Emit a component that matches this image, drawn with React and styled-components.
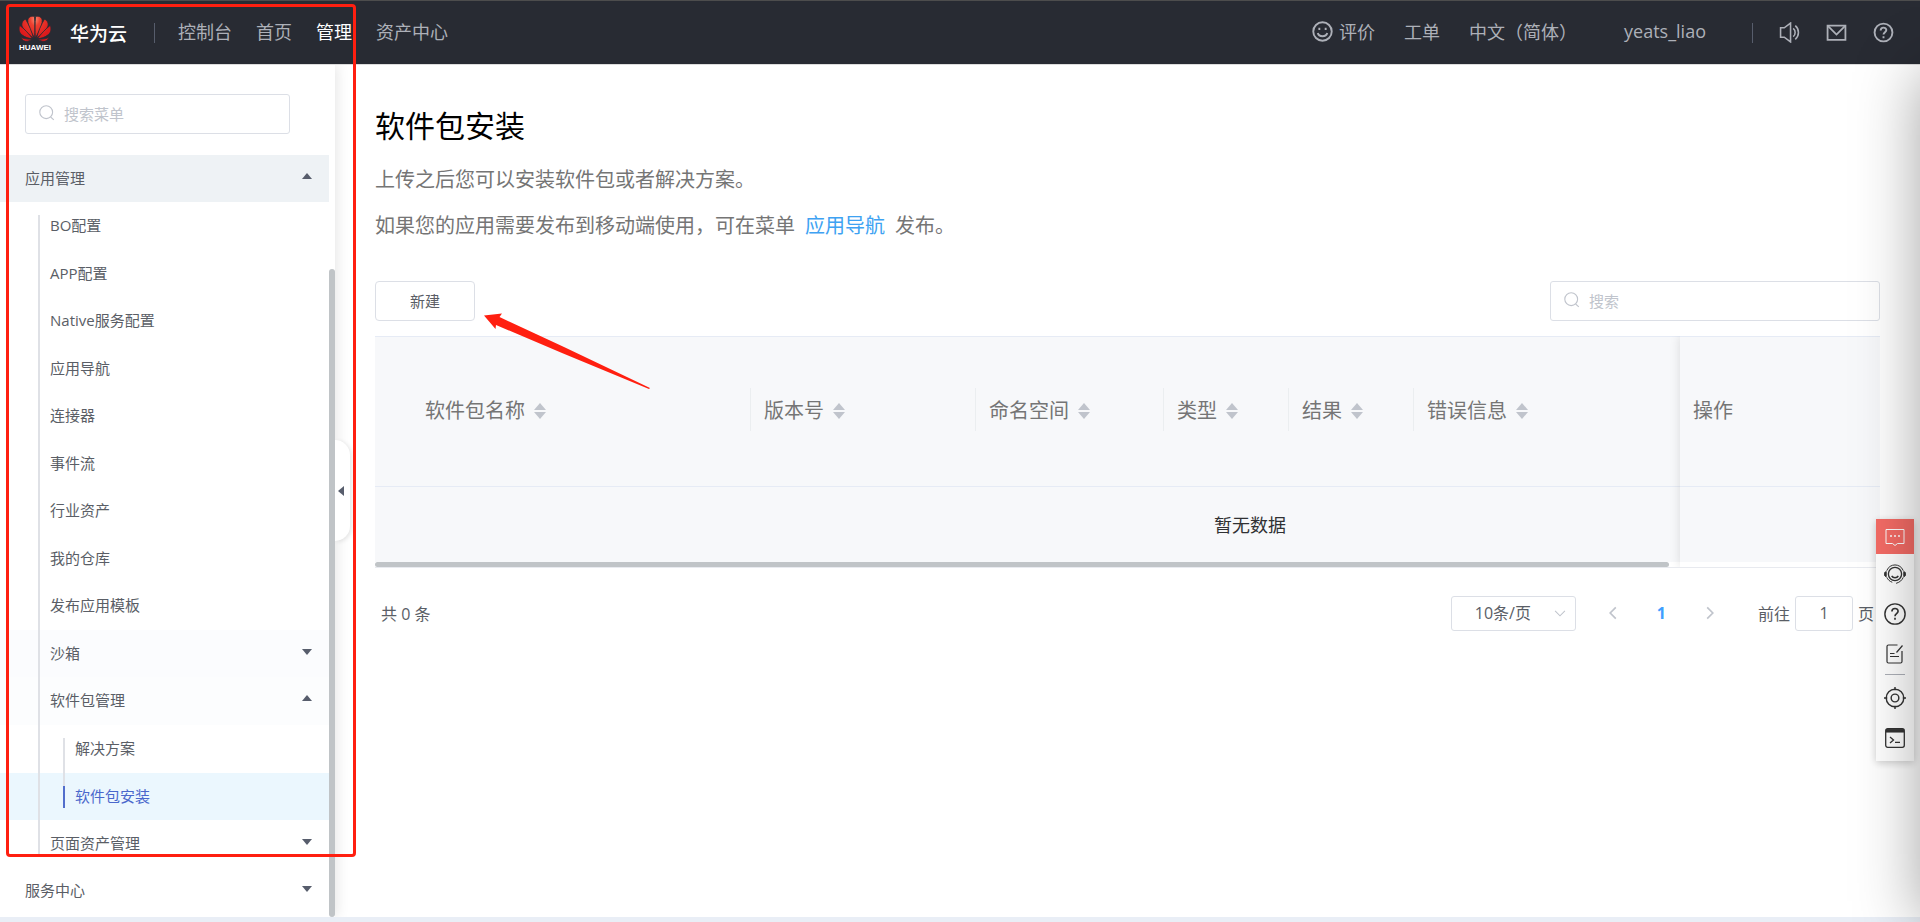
import React from 'react';
import styled, { createGlobalStyle, css } from 'styled-components';

const GlobalStyle = createGlobalStyle`
  * {
    box-sizing: border-box;
  }

  body {
    background: #fff;
    color: #5a5e66;
    font-family: 'Open Sans', 'Noto Sans CJK SC', sans-serif;
    font-size: 16px;
    margin: 0;
    overflow-x: hidden;
  }

  ul, h1, p {
    margin: 0;
    padding: 0;
  }

  ul {
    list-style: none;
  }

  a {
    color: inherit;
    text-decoration: none;
  }

  button, input, select {
    font-family: inherit;
  }
`;

const Page = styled.div`
  display: flex;
  flex-direction: column;
  min-height: 100vh;
  position: relative;
`;

/* ---------- top bar ---------- */

const TopBar = styled.header`
  align-items: center;
  background: #282b33;
  border-bottom: 1px solid #dcdcdc;
  border-top: 1px solid #4d4d4d;
  color: #adb0b8;
  display: flex;
  font-size: 18px;
  height: 65px;
  padding: 0 26px 0 18px;
`;

const Brand = styled.a`
  align-items: center;
  color: #fff;
  display: flex;
  font-size: 19px;
  font-weight: 500;
  gap: 18px;
`;

const BarDivider = styled.span`
  background: #575d6c;
  height: 20px;
  margin: ${({ $side }) => ($side === 'left' ? '0 23px 0 27px' : '0 26px 0 46px')};
  width: 1px;
`;

const Nav = styled.nav`
  display: flex;
  gap: 24px;
  padding-bottom: 3px;
`;

const NavLink = styled.a`
  color: ${({ $active }) => ($active ? '#fff' : 'inherit')};
`;

const Account = styled.div`
  align-items: center;
  display: flex;
  gap: 29px;
  margin-left: auto;
  padding-bottom: 3px;
`;

const RateLink = styled.a`
  align-items: center;
  display: flex;
  gap: 6px;
`;

const UserLink = styled.a`
  margin-left: 18px;
`;

const BarIcons = styled.div`
  display: flex;
  gap: 26px;
`;

const IconButton = styled.button`
  background: none;
  border: 0;
  color: inherit;
  cursor: pointer;
  display: flex;
  padding: 0;
`;

/* ---------- side menu ---------- */

const Body = styled.div`
  display: flex;
  flex: 1;
`;

const Sidebar = styled.aside`
  box-shadow: 2px 0 12px rgba(0, 0, 0, 0.1);
  clip-path: inset(0 -20px 0 0);
  flex: none;
  padding: 29px 6px 0 0;
  position: relative;
  width: 335px;
`;

const SearchBox = styled.label`
  align-items: center;
  border: 1px solid #dcdfe6;
  border-radius: 3px;
  color: #c0c4cc;
  display: flex;
  gap: 9px;
  height: 40px;
  padding: 0 13px;

  svg {
    margin-bottom: 3px;
  }

  input {
    background: none;
    border: 0;
    flex: 1;
    font-size: 15px;
    min-width: 0;
    outline: none;
    padding: 0;
  }

  input::placeholder {
    color: #c0c4cc;
  }
`;

const MenuSearch = styled(SearchBox)`
  margin: 0 39px 21px 25px;
`;

const MenuRow = styled.a`
  align-items: center;
  background: ${({ $tone }) => $tone || 'none'};
  display: flex;
  font-size: 15px;
  height: 47px;
  justify-content: space-between;
  padding: 0 17px 3px ${({ $level }) => 25 * $level}px;
  position: relative;

  ${({ $active }) => $active && css`
    background: #ebf7fe;
    color: #4a68cc;

    &::after {
      background: #526ecc;
      content: '';
      height: 22px;
      left: 63px;
      position: absolute;
      top: 13px;
      width: 2px;
      z-index: 2;
    }
  `}
`;

const SubMenu = styled.ul`
  position: relative;

  > li:nth-child(odd) > a {
    height: 48px;
  }

  &::before {
    background: #dfe1e6;
    bottom: 13px;
    content: '';
    left: ${({ $level }) => 25 * $level - 12}px;
    position: absolute;
    top: 13px;
    width: 2px;
    z-index: 1;
  }
`;

const Caret = styled.i`
  border: 5px solid transparent;
  border-bottom: ${({ $up }) => ($up ? '6px solid #575d6c' : 0)};
  border-top: ${({ $up }) => ($up ? 0 : '6px solid #575d6c')};
  margin-bottom: ${({ $up }) => ($up ? 3 : 0)}px;
`;

const MenuScrollbar = styled.span`
  background: #c0c4c7;
  border-radius: 3px;
  bottom: 0;
  position: absolute;
  right: 0;
  top: 204px;
  width: 6px;
`;

const CollapseHandle = styled.button`
  align-items: center;
  background: #fff;
  border: 0;
  border-radius: 0 15px 15px 0;
  box-shadow: 2px 1px 4px rgba(0, 0, 0, 0.1);
  clip-path: inset(-6px -8px -6px 0);
  display: flex;
  height: 101px;
  left: 100%;
  padding: 0 0 0 3px;
  position: absolute;
  top: 375px;
  width: 15px;

  &::before {
    border: 5px solid transparent;
    border-left: 0;
    border-right: 6px solid #575d6c;
    content: '';
  }
`;

const FooterStrip = styled.div`
  background: #e9eef6;
  height: 5px;
`;

/* ---------- content ---------- */

const Content = styled.main`
  flex: 1;
  min-width: 0;
  padding: 40px 40px 0;
`;

const Title = styled.h1`
  color: #000;
  font-size: 30px;
  font-weight: 400;
  line-height: 42px;
  margin-bottom: 10px;
`;

const Intro = styled.p`
  color: #757575;
  font-size: 20px;
  line-height: 46px;

  a {
    color: #3ea2f2;
    margin: 0 10px;
  }
`;

const Toolbar = styled.div`
  display: flex;
  justify-content: space-between;
  margin: 32px 0 15px;
`;

const CreateButton = styled.button`
  background: #fff;
  border: 1px solid #dcdfe6;
  border-radius: 4px;
  color: #5a5e66;
  font-size: 15px;
  height: 40px;
  padding: 0 0 2px;
  width: 100px;
`;

const TableSearch = styled(SearchBox)`
  width: 330px;
`;

const TableFrame = styled.div`
  border-bottom: 1px solid #e8eaef;
  overflow: hidden;
  position: relative;
`;

const Table = styled.table`
  background: #f7f8fa;
  border-collapse: collapse;
  border-top: 1px solid #e6ebf5;
  table-layout: fixed;
  width: ${({ $wide }) => ($wide ? '1750px' : '100%')};
`;

const HeadCell = styled.th`
  border-bottom: 1px solid #e6ebf5;
  color: #757575;
  font-size: 20px;
  font-weight: 400;
  height: 150px;
  padding: 0 0 4px;
  text-align: left;
  width: ${({ $width }) => $width}px;
`;

const HeadLabel = styled.div`
  align-items: center;
  border-right: 1px solid ${({ $last }) => ($last ? 'transparent' : '#ebeef0')};
  display: flex;
  gap: 9px;
  height: 43px;
  padding-left: ${({ $first }) => ($first ? 50 : 13)}px;
`;

const SortArrows = styled.span`
  display: flex;
  flex-direction: column;
  gap: 2px;
  padding-top: 2px;

  &::before,
  &::after {
    border: 6px solid transparent;
    content: '';
  }

  &::before {
    border-bottom: 7px solid #c0c4cc;
    border-top: 0;
  }

  &::after {
    border-bottom: 0;
    border-top: 7px solid #c0c4cc;
  }
`;

const EmptyCell = styled.td`
  color: #303133;
  font-size: 18px;
  height: 75px;
  padding: 0;
  text-align: center;
`;

const FixedColumn = styled.div`
  bottom: 0;
  box-shadow: 0 0 10px rgba(0, 0, 0, 0.12);
  position: absolute;
  right: 0;
  top: 0;
  width: 200px;
`;

const TableScrollbar = styled.div`
  height: 5px;

  &::before {
    background: #c0c4c7;
    border-radius: 3px;
    content: '';
    display: block;
    height: 5px;
    width: 86%;
  }
`;

const Pagination = styled.div`
  align-items: center;
  display: flex;
  height: 35px;
  margin-top: 28px;
  padding: 0 6px;
`;

const SizeSelect = styled.div`
  align-items: center;
  border: 1px solid #dcdfe6;
  border-radius: 3px;
  color: #c0c4cc;
  display: flex;
  height: 35px;
  margin-left: auto;
  padding-right: 8px;
  width: 125px;

  select {
    appearance: none;
    background: none;
    border: 0;
    color: #5a5e66;
    flex: 1;
    font-size: 16px;
    padding: 0 0 0 23px;
  }
`;

const Pager = styled.div`
  align-items: center;
  color: #c0c4cc;
  display: flex;
  gap: 37px;
  margin: 0 41px 0 30px;
`;

const PageNumber = styled.button`
  background: none;
  border: 0;
  color: #409eff;
  font-size: 16px;
  font-weight: 700;
  padding: 0;
`;

const Jumper = styled.label`
  align-items: center;
  display: flex;
  gap: 5px;

  input {
    border: 1px solid #dcdfe6;
    border-radius: 3px;
    color: #5a5e66;
    font-size: 16px;
    height: 35px;
    padding: 0;
    text-align: center;
    width: 58px;
  }
`;

/* ---------- floating parts ---------- */

const HelpDock = styled.aside`
  align-items: center;
  background: #fff;
  box-shadow: 0 2px 8px rgba(0, 0, 0, 0.2);
  color: #333;
  display: flex;
  flex-direction: column;
  position: fixed;
  right: 6px;
  top: 519px;
  width: 38px;
`;

const DockButton = styled.button`
  align-items: center;
  background: ${({ $alert }) => ($alert ? '#f56c66' : 'none')};
  border: 0;
  color: ${({ $alert }) => ($alert ? '#fff' : 'inherit')};
  display: flex;
  height: ${({ $alert }) => ($alert ? 35 : 40)}px;
  justify-content: center;
  padding: 0;
  width: 38px;
`;

const DockRule = styled.span`
  background: #adb0b8;
  height: 1px;
  margin-bottom: 3px;
  width: 20px;
`;

const DockGroup = styled.div`
  padding-bottom: ${({ $last }) => ($last ? 3 : 0)}px;
`;

const DrawerShadow = styled.div`
  bottom: 0;
  box-shadow: 0 0 60px rgba(0, 0, 0, 0.36);
  left: 100%;
  pointer-events: none;
  position: fixed;
  top: 72px;
  width: 200px;
`;

const Highlight = styled.div`
  border: 3px solid #ff1f10;
  border-radius: 4px;
  height: 853px;
  left: 6px;
  pointer-events: none;
  position: absolute;
  top: 4px;
  width: 350px;
  z-index: 2;
`;

const Pointer = styled.svg`
  left: 484px;
  pointer-events: none;
  position: absolute;
  top: 312px;
`;

/* ---------- icons ---------- */

const Icon = ({ size = 20, stroke = 1.5, children }) => (
  <svg
    width={size}
    height={size}
    viewBox="0 0 20 20"
    fill="none"
    stroke="currentColor"
    strokeWidth={stroke}
    aria-hidden="true"
  >
    {children}
  </svg>
);

const SearchIcon = () => (
  <Icon size={16} stroke={1.4}>
    <circle cx="9" cy="9" r="8" />
    <path d="M14.500 15l4 3.500" />
  </Icon>
);

const ChevronIcon = ({ d, stroke = 2.4 }) => (
  <Icon size={14} stroke={stroke}>
    <path d={d} />
  </Icon>
);

const petals = [
  'M16.700 22.800C16.900 16 17.200 8 16.400 1.600C13 .2 10 2.400 9.800 5.400C9.600 11 13.500 18 16.700 22.800Z',
  'M15.400 23C14 17 11 10 7.600 4.200C4.400 5.200 3 9 4.400 12C6.800 16.400 11.600 20.600 15.400 23Z',
  'M14.600 23.600C11.500 19.500 6.500 14 1.800 10.400C.4 13.400 .8 17 3.600 19.600C7 22.400 11 23.600 14.600 23.600Z',
  'M14.400 24.200C11 24.400 6.800 24 2.800 22.600C4.200 25.500 6.800 26.800 9.600 26.200C11.600 25.800 13 25 14.400 24.200Z',
];

const HuaweiLogo = () => (
  <svg width="34" height="36" viewBox="0 0 34 36" aria-hidden="true">
    <defs>
      <radialGradient id="petal" cx="20" cy="4" r="20" gradientUnits="userSpaceOnUse">
        <stop offset="0" stopColor="#ffb59a" />
        <stop offset="0.4" stopColor="#ee4030" />
        <stop offset="1" stopColor="#dd1a1c" />
      </radialGradient>
    </defs>
    <g fill="url(#petal)" stroke="#282b33" strokeWidth="0.8">
      {petals.map((d) => <path key={d} d={d} />)}
      <g transform="translate(34 0) scale(-1 1)">
        {petals.map((d) => <path key={d} d={d} />)}
      </g>
    </g>
    <text
      x="17"
      y="35"
      fill="#fff"
      fontFamily="Liberation Sans, sans-serif"
      fontSize="8"
      fontWeight="700"
      textAnchor="middle"
    >
      HUAWEI
    </text>
  </svg>
);

const columns = [
  { label: '软件包名称', width: 376 },
  { label: '版本号', width: 225 },
  { label: '命名空间', width: 188 },
  { label: '类型', width: 125 },
  { label: '结果', width: 125 },
  { label: '错误信息', width: 711 },
];

const appMenu = [
  'BO配置',
  'APP配置',
  'Native服务配置',
  '应用导航',
  '连接器',
  '事件流',
  '行业资产',
  '我的仓库',
  '发布应用模板',
];

function Header() {
  return (
    <TopBar>
      <Brand href="#">
        <HuaweiLogo />
        华为云
      </Brand>
      <BarDivider $side="left" />
      <Nav>
        <NavLink href="#">控制台</NavLink>
        <NavLink href="#">首页</NavLink>
        <NavLink href="#" $active>管理</NavLink>
        <NavLink href="#">资产中心</NavLink>
      </Nav>
      <Account>
        <RateLink href="#">
          <Icon size={21} stroke={1.8}>
            <circle cx="10" cy="10" r="8.800" />
            <path d="M5.500 11.500c1 4 8 4 9 0" />
            <path d="M7 6.500v2M13 6.500v2" />
          </Icon>
          评价
        </RateLink>
        <a href="#">工单</a>
        <a href="#">中文（简体）</a>
        <UserLink href="#">yeats_liao</UserLink>
      </Account>
      <BarDivider $side="right" />
      <BarIcons>
        <IconButton aria-label="公告">
          <Icon size={21}>
            <path d="M1.500 5.500h3.500l6-4.500v18l-6-4.500h-3.500z" />
            <path d="M13.500 6c2.500 2 2.500 6 0 8M15.500 3.500c4 3.500 4 9.500 0 13" />
          </Icon>
        </IconButton>
        <IconButton aria-label="消息">
          <Icon size={21} stroke={1.7}>
            <path d="M1.500 3.500h17v13.500h-17z" />
            <path d="M2 4l8 8 8-8" />
          </Icon>
        </IconButton>
        <IconButton aria-label="帮助">
          <Icon size={21} stroke={1.8}>
            <circle cx="10" cy="10" r="8.500" />
            <path d="M7.300 8c0-3.500 5.400-3.500 5.400-.3 0 2-2.700 2-2.700 4.300M10 13.500v2" />
          </Icon>
        </IconButton>
      </BarIcons>
    </TopBar>
  );
}

function SideMenu() {
  return (
    <Sidebar>
      <MenuSearch>
        <SearchIcon />
        <input placeholder="搜索菜单" aria-label="搜索菜单" />
      </MenuSearch>
      <ul>
        <li>
          <MenuRow href="#" $level={1} $tone="#eef2f5">
            应用管理
            <Caret $up />
          </MenuRow>
          <SubMenu $level={2}>
            {appMenu.map((name) => (
              <li key={name}>
                <MenuRow href="#" $level={2}>{name}</MenuRow>
              </li>
            ))}
            <li>
              <MenuRow href="#" $level={2} $tone="#fbfcfe">
                沙箱
                <Caret />
              </MenuRow>
            </li>
            <li>
              <MenuRow href="#" $level={2} $tone="#fcfdfe">
                软件包管理
                <Caret $up />
              </MenuRow>
              <SubMenu $level={3}>
                <li>
                  <MenuRow href="#" $level={3}>解决方案</MenuRow>
                </li>
                <li>
                  <MenuRow href="#" $level={3} $active>软件包安装</MenuRow>
                </li>
              </SubMenu>
            </li>
            <li>
              <MenuRow href="#" $level={2}>
                页面资产管理
                <Caret />
              </MenuRow>
            </li>
          </SubMenu>
        </li>
        <li>
          <MenuRow href="#" $level={1}>
            服务中心
            <Caret />
          </MenuRow>
        </li>
      </ul>
      <MenuScrollbar />
      <CollapseHandle aria-label="收起菜单" />
    </Sidebar>
  );
}

function PackageTable() {
  return (
    <TableFrame>
      <Table $wide>
        <thead>
          <tr>
            {columns.map(({ label, width }, i) => (
              <HeadCell key={label} $width={width}>
                <HeadLabel $first={i === 0} $last={i === columns.length - 1}>
                  {label}
                  <SortArrows />
                </HeadLabel>
              </HeadCell>
            ))}
          </tr>
        </thead>
        <tbody>
          <tr>
            <EmptyCell colSpan={columns.length}>暂无数据</EmptyCell>
          </tr>
        </tbody>
      </Table>
      <TableScrollbar />
      <FixedColumn>
        <Table>
          <thead>
            <tr>
              <HeadCell>
                <HeadLabel $last>操作</HeadLabel>
              </HeadCell>
            </tr>
          </thead>
          <tbody>
            <tr>
              <EmptyCell />
            </tr>
          </tbody>
        </Table>
      </FixedColumn>
    </TableFrame>
  );
}

function Dock() {
  return (
    <HelpDock>
      <DockButton $alert aria-label="在线咨询">
        <Icon size={20} stroke={1}>
          <path d="M1 2.500h18v14h-6.500l-2.500 2-2.500-2h-6.500z" />
          <path d="M5 9h2M9 9h2M13 9h2" strokeWidth="1.500" />
        </Icon>
      </DockButton>
      <DockGroup>
        <DockButton aria-label="客服">
          <Icon size={22} stroke={0.9}>
            <circle cx="10" cy="10" r="6" strokeWidth="1.200" />
            <path d="M2.500 7c2.500-7 12.500-7 15 0M2.500 13c1 2 2.500 3.700 5 4.500M17.500 13c-1 2.500-3 4.500-6.500 5.500" />
            <path d="M7 11.800c1.200 2.200 4.800 2.200 6 0" strokeWidth="1.400" />
            <path d="M2 7.800v4.600c-2.300-.5-2.300-4 0-4.600zM18 7.800v4.600c2.300-.5 2.300-4 0-4.600z" fill="currentColor" />
          </Icon>
        </DockButton>
        <DockButton aria-label="帮助">
          <Icon size={22} stroke={1.3}>
            <circle cx="10" cy="10" r="9.200" />
            <path d="M7.200 7.800c0-3.700 5.600-3.700 5.600-.4 0 2.200-2.800 2.300-2.800 4.600M10 13.500v1.700" strokeWidth="1.500" />
          </Icon>
        </DockButton>
        <DockButton aria-label="建议">
          <Icon size={20} stroke={1.2}>
            <path d="M12.500 1h-9q-1.500 0-1.500 1.500v15q0 1.500 1.500 1.500h12q1.500 0 1.500-1.500v-10.500" />
            <path d="M17.500 1.500l-6 7M5 9.500h4.500M5 12.500h9" />
          </Icon>
        </DockButton>
      </DockGroup>
      <DockRule />
      <DockGroup $last>
        <DockButton aria-label="定位">
          <Icon size={22} stroke={1.3}>
            <circle cx="10" cy="10" r="8" />
            <circle cx="10" cy="10" r="3.500" />
            <path d="M10 0v3M10 17v3M0 10h3M17 10h3" />
          </Icon>
        </DockButton>
        <DockButton aria-label="命令行">
          <Icon size={20} stroke={1.3}>
            <rect x="0.700" y="0.700" width="18.600" height="18.600" rx="2" />
            <path d="M1 2.800h18" strokeWidth="3.500" />
            <path d="M5 9l3.500 3-3.500 3M10 14.300h5" />
          </Icon>
        </DockButton>
      </DockGroup>
    </HelpDock>
  );
}

function App() {
  return (
    <Page>
      <GlobalStyle />
      <Header />
      <Body>
        <SideMenu />
        <Content>
          <Title>软件包安装</Title>
          <Intro>上传之后您可以安装软件包或者解决方案。</Intro>
          <Intro>
            如果您的应用需要发布到移动端使用，可在菜单<a href="#">应用导航</a>发布。
          </Intro>
          <Toolbar>
            <CreateButton>新建</CreateButton>
            <TableSearch>
              <SearchIcon />
              <input placeholder="搜索" aria-label="搜索" />
            </TableSearch>
          </Toolbar>
          <PackageTable />
          <Pagination>
            <span>共 0 条</span>
            <SizeSelect>
              <select aria-label="每页条数">
                <option>10条/页</option>
              </select>
              <ChevronIcon d="M3 7l7 7 7-7" stroke={1.5} />
            </SizeSelect>
            <Pager>
              <IconButton aria-label="上一页">
                <ChevronIcon d="M14 2l-8 8 8 8" />
              </IconButton>
              <PageNumber>1</PageNumber>
              <IconButton aria-label="下一页">
                <ChevronIcon d="M6 2l8 8-8 8" />
              </IconButton>
            </Pager>
            <Jumper>
              前往
              <input defaultValue="1" aria-label="页码" />
              页
            </Jumper>
          </Pagination>
        </Content>
      </Body>
      <FooterStrip />
      <Dock />
      <DrawerShadow />
      <Highlight />
      <Pointer width="168" height="80" viewBox="0 0 168 80" aria-hidden="true">
        <path d="M0 3.500L18 1.500L15.500 5L80 35L166 76L165 77L78 41L12 13L11.500 17Z" fill="#ff1f10" />
      </Pointer>
    </Page>
  );
}

export default App;
